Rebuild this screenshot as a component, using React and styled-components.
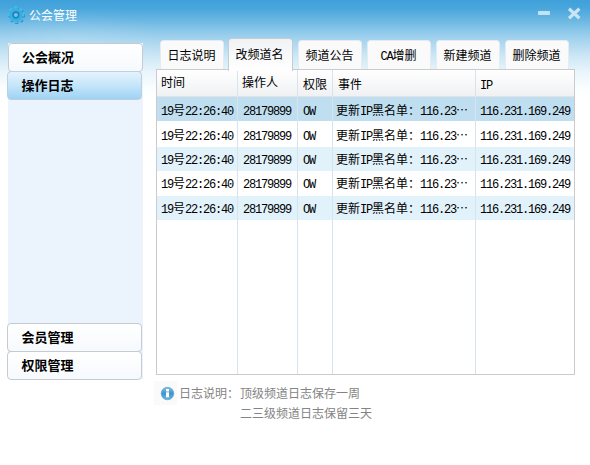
import React from "react";
import styled, { createGlobalStyle } from "styled-components";

const GlobalStyle = createGlobalStyle`
  *, *::before, *::after { box-sizing: border-box; }
  html, body { margin: 0; padding: 0; background: #fff; overflow: hidden; }
  body {
    font-family: "Noto Sans CJK SC", sans-serif;
    font-size: 12px;
    line-height: 16px;
    color: #000;
  }
`;

const Window = styled.div`
  width: 590px;
  height: 465px;
  display: flex;
  flex-direction: column;
  background:
    radial-gradient(ellipse 90px 30px at 75px 40px, rgba(255, 255, 255, 0.12), rgba(255, 255, 255, 0)),
    linear-gradient(#3fa0da 0px, #48a6dc 8px, #69b6e2 20px, #8fc9ea 32px, #b0d9f0 44px, #cfe8f6 57px, #e9f5fb 72px, #fafdfe 88px, #ffffff 98px);
`;

const TitleBar = styled.header`
  height: 30px;
  flex: none;
  display: flex;
  padding: 0 8px 0 7px;
`;

const GearIcon = styled.svg`
  width: 18px;
  height: 18px;
  margin-top: 6px;
`;

const Title = styled.h1`
  flex: 1;
  margin: 7px 0 0 4px;
  font-size: 12px;
  font-weight: 400;
  color: #fff;
`;

const WindowButton = styled.button`
  border: 0;
  padding: 0;
  margin: 7px 0 0 ${(p) => p.$gap || 0}px;
  width: 16px;
  height: 14px;
  background: none;
  svg { display: block; }
`;

const Body = styled.div`
  flex: 1;
  display: flex;
  padding-left: 7px;
`;

const Sidebar = styled.nav`
  width: 136px;
  height: 336px;
  margin-top: 13px;
  display: flex;
  flex-direction: column;
  background: linear-gradient(#ebf3fc, #ebf3fc) 1px 0 / 135px 336px no-repeat;
`;

const NavItem = styled.button`
  width: 135px;
  height: 29px;
  flex: none;
  margin: 0 0 -1px ${(p) => (p.$shift ? 1 : 0)}px;
  padding: 0 0 2px ${(p) => (p.$shift ? 13 : 13.5)}px;
  border: 1px solid ${(p) => (p.$active ? "#bfd0dd" : "#c6cbd1")};
  border-radius: 4px;
  background: ${(p) =>
    p.$active ? "linear-gradient(#e3f3fd, #c5e5f9 50%, #9dd3f5)" : "linear-gradient(#ffffff, #f6f9fd)"};
  font: 700 13px/16px "Noto Sans CJK SC", sans-serif;
  text-align: left;
  color: #000;
`;

const NavSpacer = styled.div`
  flex: 1;
`;

const Main = styled.main`
  width: 422px;
  margin-left: 11px;
  display: flex;
  flex-direction: column;
`;

const Tabs = styled.div`
  height: 39px;
  display: flex;
  align-items: flex-end;
  gap: 5px;
  padding-left: 6px;
`;

const Tab = styled.button`
  width: ${(p) => (p.$active ? 65 : 64)}px;
  height: ${(p) => (p.$active ? 33 : 29)}px;
  margin: 0 0 ${(p) => (p.$active ? -2 : 0)}px ${(p) => (p.$active ? -1 : 0)}px;
  padding: 0 ${(p) => (p.$active ? 2 : 1)}px ${(p) => (p.$active ? 3 : 1)}px 0;
  border: 1px solid ${(p) => (p.$active ? "#c3cdd5" : "#e4ecf2")};
  border-bottom: 0;
  border-radius: 4px 4px 0 0;
  background: ${(p) => (p.$active ? "linear-gradient(#f1f2f4, #ffffff)" : "#fafafb")};
  z-index: ${(p) => (p.$active ? 1 : 0)};
  font: 400 12px/16px "Noto Sans CJK SC", sans-serif;
  color: #000;
  white-space: nowrap;
`;

const Table = styled.div`
  width: 419px;
  height: 306px;
  margin-left: 2px;
  border: 1px solid #c9cbcd;
  display: flex;
  background: #fff;
`;

const Column = styled.div`
  width: ${(p) => p.$width}px;
  flex: none;
  overflow: hidden;
  border-right: ${(p) => (p.$last ? "0" : "1px solid #d9e3ee")};
`;

const HeadCell = styled.div`
  height: 27px;
  padding: ${(p) => p.$top}px 0 0 ${(p) => p.$left}px;
  border-bottom: 1px solid #dfe3e8;
  background: linear-gradient(#ffffff, #f0f1f3);
  white-space: nowrap;
`;

const Cell = styled.div`
  height: ${(p) => p.$height}px;
  line-height: ${(p) => p.$line}px;
  padding-left: ${(p) => p.$left}px;
  background: ${(p) => p.$color};
  white-space: nowrap;
`;

const HalfWidth = styled.span`
  font-family: "Liberation Mono", monospace;
  font-size: 12px;
  line-height: 1;
  letter-spacing: -1.2px;
`;

const Note = styled.div`
  display: flex;
  margin-top: 6px;
  color: #848484;
`;

const NoteBadge = styled.div`
  width: 23px;
  height: 24px;
  display: flex;
  padding: 5px 0 0 6px;
  background: #fafafa;
`;

const NoteLabel = styled.div`
  width: 61px;
  margin: 4px 0 0 2px;
`;

const NoteLines = styled.div`
  margin-top: 2px;
  line-height: 20px;
`;

/* Latin letters and digits take exactly half the width of a Chinese character. */
function Mixed({ text }) {
  return text
    .split(/([\x20-\x7e]+)/)
    .filter(Boolean)
    .map((run, i) => (/^[\x20-\x7e]/.test(run) ? <HalfWidth key={i}>{run}</HalfWidth> : run));
}

const TABS = ["日志说明", "改频道名", "频道公告", "CA增删", "新建频道", "删除频道"];

const COLUMNS = [
  { name: "时间", value: "19号22:26:40", width: 81, headLeft: 4, headTop: 4, left: 4 },
  { name: "操作人", value: "28179899", width: 60, headLeft: 4, headTop: 4, left: 5 },
  { name: "权限", value: "OW", width: 35, headLeft: 5, headTop: 6, left: 5 },
  { name: "事件", value: "更新IP黑名单：116.23…", width: 143, headLeft: 5, headTop: 6, left: 3 },
  { name: "IP", value: "116.231.169.249", width: 98, headLeft: 4, headTop: 6, left: 4 },
];

const ROWS = [
  { height: 24, line: 25, color: "#bfdff0" },
  { height: 26, line: 27, color: "#ffffff" },
  { height: 24, line: 23, color: "#e2f2fb" },
  { height: 25, line: 24, color: "#ffffff" },
  { height: 24, line: 23, color: "#e2f2fb" },
];

export default function App() {
  return (
    <>
      <GlobalStyle />
      <Window lang="zh-CN">
        <TitleBar>
          <GearIcon viewBox="0 0 18 18">
            <g fill="#1b78b0" opacity="0.7" transform="translate(0.7 0.9)">
              {[0, 45, 90, 135].map((a) => (
                <rect key={a} x="7.2" y="0.3" width="3.4" height="17" rx="1" transform={`rotate(${a} 8.9 8.8)`} />
              ))}
            </g>
            <g fill="#45bdea">
              {[0, 45, 90, 135].map((a) => (
                <rect key={a} x="7.2" y="0.3" width="3.4" height="17" rx="0.9" transform={`rotate(${a} 8.9 8.8)`} />
              ))}
              <circle cx="8.9" cy="8.8" r="6.5" fill="#35b0e2" />
            </g>
            <circle cx="8.9" cy="8.8" r="3.6" fill="#1f7fb8" />
            <circle cx="8.9" cy="9" r="2.1" fill="#74c2e8" />
          </GearIcon>
          <Title>公会管理</Title>
          <WindowButton aria-label="最小化">
            <svg width="16" height="14">
              <rect x="2" y="4" width="12" height="4" rx="0.8" fill="#c3e2f4" />
            </svg>
          </WindowButton>
          <WindowButton $gap={14} aria-label="关闭">
            <svg width="16" height="14">
              <path d="M3 1.8 L13.4 11.2 M13.4 1.8 L3 11.2" stroke="#c9e5f5" strokeWidth="3.2" />
            </svg>
          </WindowButton>
        </TitleBar>
        <Body>
          <Sidebar>
            <NavItem $shift>公会概况</NavItem>
            <NavItem $active>操作日志</NavItem>
            <NavSpacer />
            <NavItem>会员管理</NavItem>
            <NavItem>权限管理</NavItem>
          </Sidebar>
          <Main>
            <Tabs>
              {TABS.map((name, i) => (
                <Tab key={name} $active={i === 1}>
                  <Mixed text={name} />
                </Tab>
              ))}
            </Tabs>
            <Table>
              {COLUMNS.map((c, i) => (
                <Column key={c.name} $width={c.width} $last={i === COLUMNS.length - 1}>
                  <HeadCell $left={c.headLeft} $top={c.headTop}>
                    <Mixed text={c.name} />
                  </HeadCell>
                  {ROWS.map((r, n) => (
                    <Cell key={n} $left={c.left} $height={r.height} $line={r.line} $color={r.color}>
                      <Mixed text={c.value} />
                    </Cell>
                  ))}
                </Column>
              ))}
            </Table>
            <Note>
              <NoteBadge>
                <svg width="15" height="15" viewBox="0 0 15 15">
                  <defs>
                    <linearGradient id="info" x1="0" y1="0" x2="0" y2="1">
                      <stop offset="0" stopColor="#7cbfe4" />
                      <stop offset="0.5" stopColor="#3f95cd" />
                      <stop offset="1" stopColor="#69b9e5" />
                    </linearGradient>
                  </defs>
                  <circle cx="7.5" cy="7.5" r="6.3" fill="url(#info)" stroke="#579cc9" strokeWidth="0.6" />
                  <rect x="6" y="3" width="3" height="2.5" fill="#fff" />
                  <rect x="6" y="6.3" width="3" height="5" fill="#fff" />
                </svg>
              </NoteBadge>
              <NoteLabel>日志说明：</NoteLabel>
              <NoteLines>
                <div>顶级频道日志保存一周</div>
                <div>二三级频道日志保留三天</div>
              </NoteLines>
            </Note>
          </Main>
        </Body>
      </Window>
    </>
  );
}
